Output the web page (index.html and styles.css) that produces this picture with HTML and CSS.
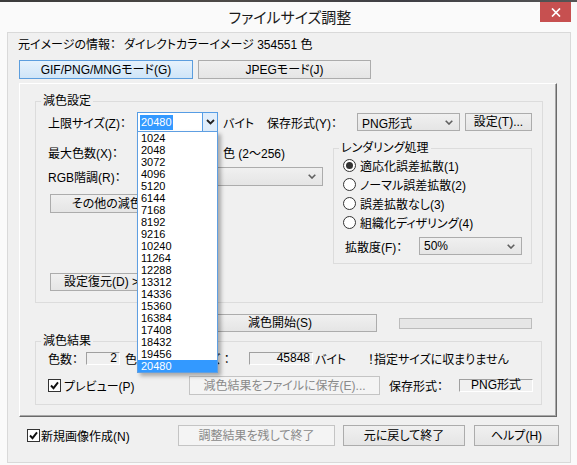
FILE: index.html
```html
<!DOCTYPE html>
<html lang="ja">
<head>
<meta charset="utf-8">
<title>ファイルサイズ調整</title>
<link rel="stylesheet" href="styles.css">
</head>
<body>
<div class="window">
  <div class="strip"></div>
  <div class="titlebar">
    <div class="title">ファイルサイズ調整</div>
    <div class="close"><svg width="10" height="9" viewBox="0 0 10 9"><path d="M1 0.5L9 8.5M9 0.5L1 8.5" stroke="#fff" stroke-width="1.7" fill="none"/></svg></div>
  </div>
  <div class="client">
    <div class="info"><span class="info-label">元イメージの情報：</span><span>ダイレクトカラーイメージ 354551 色</span></div>
    <div class="modes">
      <div class="btn mode-gif">GIF/PNG/MNGモード(G)</div>
      <div class="btn mode-jpeg">JPEGモード(J)</div>
    </div>
    <div class="panel">
      <div class="group g1">
        <span class="legend">減色設定</span>
        <div class="row r1">
          <span class="lbl w89">上限サイズ(Z)：</span>
          <div class="combo-open">
            <span class="edit"><span class="sel">20480</span></span>
            <span class="drop"><svg width="9" height="6" viewBox="0 0 9 6"><path d="M1 1L4.5 4.5L8 1" fill="none" stroke="#222" stroke-width="1.8"/></svg></span>
            <div class="list">
              <div class="item">1024</div>
              <div class="item">2048</div>
              <div class="item">3072</div>
              <div class="item">4096</div>
              <div class="item">5120</div>
              <div class="item">6144</div>
              <div class="item">7168</div>
              <div class="item">8192</div>
              <div class="item">9216</div>
              <div class="item">10240</div>
              <div class="item">11264</div>
              <div class="item">12288</div>
              <div class="item">13312</div>
              <div class="item">14336</div>
              <div class="item">15360</div>
              <div class="item">16384</div>
              <div class="item">17408</div>
              <div class="item">18432</div>
              <div class="item">19456</div>
              <div class="item item-sel">20480</div>
            </div>
          </div>
          <span class="lbl unit">バイト</span>
          <span class="lbl w90">保存形式(Y)：</span>
          <div class="combo w103"><span>PNG形式</span><svg width="8" height="5" viewBox="0 0 8 5"><path d="M0.7 0.7L4 4L7.3 0.7" fill="none" stroke="#606060" stroke-width="1.6"/></svg></div>
          <div class="btn btn-settings">設定(T)...</div>
        </div>
        <div class="body">
          <div class="leftcol">
            <div class="row r2"><span class="lbl w89">最大色数(X)：</span><span class="editbox"></span><span class="lbl range">色 (2～256)</span></div>
            <div class="row r3"><span class="lbl w89">RGB階調(R)：</span><div class="combo w186"><span></span><svg width="8" height="5" viewBox="0 0 8 5"><path d="M0.7 0.7L4 4L7.3 0.7" fill="none" stroke="#606060" stroke-width="1.6"/></svg></div></div>
            <div class="btn btn-other">その他の減色設定(O)...</div>
            <div class="btn btn-restore">設定復元(D) &gt;&gt;</div>
          </div>
          <div class="group g-render">
            <span class="legend">レンダリング処理</span>
            <div class="radios">
              <div class="radio-row"><svg class="radio" width="13" height="13" viewBox="0 0 13 13"><circle cx="6.5" cy="6.5" r="6" fill="#fff" stroke="#333"/><circle cx="6.5" cy="6.5" r="3.5" fill="#333"/></svg><span>適応化誤差拡散(1)</span></div>
              <div class="radio-row"><svg class="radio" width="13" height="13" viewBox="0 0 13 13"><circle cx="6.5" cy="6.5" r="6" fill="#fff" stroke="#333"/></svg><span>ノーマル誤差拡散(2)</span></div>
              <div class="radio-row"><svg class="radio" width="13" height="13" viewBox="0 0 13 13"><circle cx="6.5" cy="6.5" r="6" fill="#fff" stroke="#333"/></svg><span>誤差拡散なし(3)</span></div>
              <div class="radio-row"><svg class="radio" width="13" height="13" viewBox="0 0 13 13"><circle cx="6.5" cy="6.5" r="6" fill="#fff" stroke="#333"/></svg><span>組織化ディザリング(4)</span></div>
            </div>
            <div class="row diff"><span class="lbl w74">拡散度(F)：</span><div class="combo w103"><span>50%</span><svg width="8" height="5" viewBox="0 0 8 5"><path d="M0.7 0.7L4 4L7.3 0.7" fill="none" stroke="#606060" stroke-width="1.6"/></svg></div></div>
          </div>
        </div>
      </div>
      <div class="row run">
        <div class="btn btn-run">減色開始(S)</div>
        <div class="progress"></div>
      </div>
      <div class="group g2">
        <span class="legend">減色結果</span>
        <div class="row ra">
          <span class="lbl w38">色数：</span>
          <span class="field w34">2</span>
          <span class="lbl unit-c">色</span>
          <span class="lbl hidden-lbl">ファイルサイズ：</span>
          <span class="field w64">45848</span>
          <span class="lbl unit-b">バイト</span>
          <span class="lbl">！指定サイズに収まりません</span>
        </div>
        <div class="row rb">
          <span class="chk-label w141"><svg class="chk" width="13" height="13" viewBox="0 0 13 13"><rect x="0.5" y="0.5" width="12" height="12" fill="#fff" stroke="#333"/><path d="M3 6.5L5.5 9.2L10 3.3" fill="none" stroke="#111" stroke-width="1.9"/></svg><span>プレビュー(P)</span></span>
          <div class="btn disabled btn-save">減色結果をファイルに保存(E)...</div>
          <span class="lbl w70 save-lbl">保存形式：</span>
          <span class="field w74 center">PNG形式</span>
        </div>
      </div>
    </div>
    <div class="row bottom">
      <span class="chk-label w151"><svg class="chk" width="13" height="13" viewBox="0 0 13 13"><rect x="0.5" y="0.5" width="12" height="12" fill="#fff" stroke="#333"/><path d="M3 6.5L5.5 9.2L10 3.3" fill="none" stroke="#111" stroke-width="1.9"/></svg><span>新規画像作成(N)</span></span>
      <div class="btn disabled btn-keep">調整結果を残して終了</div>
      <div class="btn btn-revert">元に戻して終了</div>
      <div class="btn btn-help">ヘルプ(H)</div>
    </div>
  </div>
</div>
</body>
</html>
```

FILE: styles.css
```css
* { box-sizing: border-box; }
html, body { margin: 0; padding: 0; }
body {
  width: 577px;
  height: 465px;
  overflow: hidden;
  background: #fafafa;
  font-family: "Liberation Sans", "Noto Sans CJK JP", sans-serif;
  font-size: 12px;
  color: #000;
  font-feature-settings: "palt";
}
.window { position: relative; width: 577px; height: 465px; background: #fafafa; }
.strip { height: 2px; background: linear-gradient(to right, #3b3b3b, #4d4a47 40%, #3e3e44 70%, #555); }
.titlebar { height: 30px; display: grid; grid-template-columns: 1fr auto 1fr; }
.title {
  grid-column: 2;
  font-family: "Noto Sans CJK JP", sans-serif;
  font-size: 15px;
  line-height: 30px;
  color: #1a1a1a;
  padding-left: 3px;
}
.close {
  grid-column: 3;
  justify-self: end;
  align-self: start;
  margin-right: 6px;
  width: 31px;
  height: 20px;
  background: #c75050;
  display: flex;
  align-items: center;
  justify-content: center;
}
.client {
  margin-left: 7px;
  width: 564px;
  height: 431px;
  border: 1px solid #d9d9d9;
  background: #f0f0f0;
  display: flex;
  flex-direction: column;
}
.info {
  margin-top: 5px;
  height: 14px;
  padding-left: 10px;
  display: flex;
  align-items: center;
  line-height: 14px;
  white-space: nowrap;
}
.info-label { width: 106px; }
.modes { margin-top: 8px; padding-left: 11px; display: flex; gap: 5px; height: 19px; }

.btn {
  display: flex;
  align-items: center;
  justify-content: center;
  border: 1px solid #acacac;
  background: linear-gradient(#f0f0f0, #e5e5e5);
  white-space: nowrap;
  overflow: hidden;
  line-height: 14px;
  flex: none;
}
.btn.disabled { border-color: #c4c4c4; background: #f4f4f4; color: #8a8a8a; }
.mode-gif { width: 174px; border-color: #5c9ede; background: linear-gradient(#e6f2fc, #cfe5f8); }
.mode-jpeg { width: 173px; }

.panel {
  margin-top: 4px;
  margin-left: 11px;
  width: 538px;
  height: 334px;
  border-top: 1px solid #fff;
  border-left: 1px solid #fff;
  border-right: 1px solid #6a6a6a;
  border-bottom: 1px solid #6a6a6a;
  box-shadow: inset -1px -1px 0 #a8a8a8;
  padding: 17px 0 0 15px;
  display: flex;
  flex-direction: column;
}
.group { position: relative; border: 1px solid #dcdcdc; flex: none; }
.legend {
  position: absolute;
  top: -8px;
  left: 5px;
  padding: 0 2px;
  line-height: 14px;
  background: #f0f0f0;
  white-space: nowrap;
}
.row { display: flex; align-items: center; white-space: nowrap; flex: none; }
.lbl { flex: none; white-space: nowrap; }
.w38 { width: 38px; }
.w70 { width: 70px; }
.w74 { width: 74px; }
.w89 { width: 89px; }
.w90 { width: 90px; }

.g1 { width: 508px; height: 202px; display: flex; flex-direction: column; }
.r1 { margin-top: 10px; height: 20px; padding-left: 12px; }
.unit { margin-left: 5px; width: 44px; }

.combo-open {
  position: relative;
  width: 81px;
  height: 20px;
  border: 1px solid #569de5;
  background: #fff;
  display: flex;
  flex: none;
}
.edit { flex: 1; display: flex; align-items: center; padding-left: 2px; }
.sel {
  background: #3399ff;
  color: #fff;
  font-size: 11px;
  line-height: 15px;
  height: 15px;
  padding: 0 1px;
}
.drop {
  width: 15px;
  border-left: 1px solid #569de5;
  background: #e1eefb;
  display: flex;
  align-items: center;
  justify-content: center;
}
.list {
  position: absolute;
  top: 18px;
  left: -1px;
  width: 81px;
  height: 242px;
  border: 1px solid #5f9fe2;
  background: #fff;
  box-shadow: 3px 3px 4px rgba(0, 0, 0, 0.3);
  z-index: 10;
}
.item { height: 12px; line-height: 12px; font-size: 11px; padding-left: 3px; }
.item-sel { background: #3399ff; color: #fff; }

.combo {
  display: flex;
  align-items: center;
  justify-content: space-between;
  padding: 0 6px 0 4px;
  border: 1px solid #acacac;
  background: linear-gradient(#f0f0f0, #e5e5e5);
  flex: none;
  height: 18px;
}
.w103 { width: 103px; }
.w186 { width: 186px; height: 19px; }
.btn-settings { margin-left: 5px; width: 67px; height: 18px; }

.body { display: flex; }
.leftcol { width: 297px; padding-left: 12px; display: flex; flex-direction: column; }
.r2 { margin-top: 11px; height: 18px; }
.editbox { width: 81px; height: 18px; background: #fff; border: 1px solid #acacac; flex: none; }
.range { margin-left: 5px; }
.r3 { margin-top: 6px; height: 19px; }
.btn-other { margin-top: 8px; margin-left: 2px; width: 165px; height: 19px; }
.btn-restore { margin-top: 60px; margin-left: 2px; width: 110px; height: 18px; }

.g-render { margin-top: 16px; width: 199px; height: 116px; }
.radios { padding-top: 7px; padding-left: 9px; }
.radio-row { height: 19px; display: flex; align-items: center; gap: 4px; white-space: nowrap; }
.radio { flex: none; }
.diff { margin-top: 5px; padding-left: 11px; height: 18px; }

.run { margin-top: 11px; height: 18px; }
.btn-run { margin-left: 148px; width: 194px; height: 18px; }
.progress { margin-left: 22px; width: 133px; height: 11px; border: 1px solid #bcbcbc; background: #e6e6e6; }

.g2 { margin-top: 9px; width: 507px; height: 64px; }
.ra { margin-top: 10px; height: 13px; padding-left: 12px; }
.field {
  flex: none;
  height: 13px;
  line-height: 11px;
  border-top: 1px solid #a0a0a0;
  border-left: 1px solid #a0a0a0;
  border-right: 1px solid #fff;
  border-bottom: 1px solid #fff;
  padding: 0 2px;
  text-align: right;
}
.field.center { text-align: center; }
.w34 { width: 34px; }
.w64 { width: 64px; }
.unit-c { margin-left: 5px; width: 12px; }
.hidden-lbl { width: 112px; text-align: right; padding-right: 21px; font-feature-settings: normal; }
.unit-b { margin-left: 2px; width: 53px; }
.rb { margin-top: 11px; height: 19px; padding-left: 12px; }
.chk-label { display: flex; align-items: center; gap: 3px; flex: none; white-space: nowrap; }
.chk { flex: none; }
.w141 { width: 141px; }
.w151 { width: 151px; gap: 1px; }
.btn-save { width: 191px; height: 19px; }
.save-lbl { margin-left: 9px; }
.w74.field { width: 74px; }

.bottom { margin-top: 8px; height: 21px; padding-left: 19px; }
.btn-keep { width: 157px; height: 21px; }
.btn-revert { margin-left: 8px; width: 122px; height: 21px; }
.btn-help { margin-left: 9px; width: 85px; height: 21px; }
```
